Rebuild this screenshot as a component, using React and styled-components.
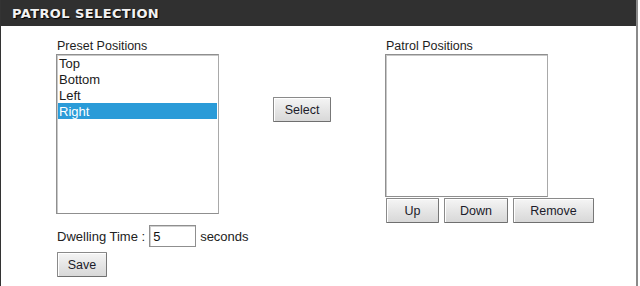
import React from 'react'
import styled, { createGlobalStyle } from 'styled-components'

const presets = ['Top', 'Bottom', 'Left', 'Right']

const App = () => {
  return (
    <>
      <GlobalStyle />
      <Frame>
        <Header>PATROL SELECTION</Header>
        <Body>
          <Column>
            <Label>Preset Positions</Label>
            <ListBox $height={160}>
              {presets.map((p) => (
                <Item key={p} $selected={p === 'Right'}>{p}</Item>
              ))}
            </ListBox>
            <DwellRow>
              Dwelling Time :
              <TimeInput defaultValue="5" />
              seconds
            </DwellRow>
            <Button $width={50}>Save</Button>
          </Column>

          <Middle>
            <Button $width={58}>Select</Button>
          </Middle>

          <Column>
            <Label>Patrol Positions</Label>
            <ListBox $height={143} />
            <ButtonRow>
              <Button $width={53}>Up</Button>
              <Button $width={64}>Down</Button>
              <Button $width={81}>Remove</Button>
            </ButtonRow>
          </Column>
        </Body>
      </Frame>
    </>
  )
}

export default App

const GlobalStyle = createGlobalStyle`
    html, body {
        margin: 0;
        padding: 0;
        background: #fff;
    }
    body {
        font-family: "Liberation Sans", Arial, sans-serif;
        font-size: 12px;
        color: #222;
    }
`

const Frame = styled.div`
    width: 638px;
    height: 286px;
    box-sizing: border-box;
    border-left: 1px solid #333;
    border-right: 2px solid #8a8a8a;
`

const Header = styled.div`
    height: 26px;
    background: #303030;
    color: #f2f2f2;
    font-family: "DejaVu Sans", Verdana, sans-serif;
    font-weight: bold;
    font-size: 13px;
    letter-spacing: 0.4px;
    line-height: 28px;
    padding-left: 11px;
    text-shadow: 1px 1px 1px #000;
`

const Body = styled.div`
    display: flex;
    align-items: flex-start;
    padding: 13px 0 0 55px;
`

const Column = styled.div`
    display: flex;
    flex-direction: column;
    align-items: flex-start;
    width: 163px;
`

const Middle = styled.div`
    margin: 58px 54px 0;
`

const Label = styled.div`
    height: 15px;
    line-height: 15px;
    padding-left: 1px;
    font-size: 12.5px;
    color: #1e1e1e;
`

const ListBox = styled.div`
    width: 163px;
    height: ${(p) => p.$height}px;
    box-sizing: border-box;
    border: 1px solid #8f8f8f;
    border-right-color: #a9a9a9;
    box-shadow: inset 1px 1px 0 #c8c8c8;
    padding: 0 1px;
    background: #fff;
    overflow: hidden;
`

const Item = styled.div`
    height: 16px;
    line-height: 17px;
    font-size: 13px;
    padding-left: 1px;
    color: ${(p) => (p.$selected ? '#fff' : '#1a1a1a')};
    background: ${(p) => (p.$selected ? '#2a9bd8' : 'transparent')};
`

const DwellRow = styled.div`
    display: flex;
    align-items: center;
    gap: 4px;
    margin-top: 11px;
    padding-left: 1px;
    height: 22px;
    font-size: 13px;
    white-space: nowrap;
`

const TimeInput = styled.input`
    width: 47px;
    height: 22px;
    box-sizing: border-box;
    border: 1px solid #8f8f8f;
    box-shadow: inset 1px 1px 0 #d0d0d0;
    padding: 0 3px;
    font-family: "Liberation Sans", Arial, sans-serif;
    font-size: 13px;
    color: #111;
    outline: none;
`

const Button = styled.button`
    width: ${(p) => p.$width}px;
    height: 25px;
    box-sizing: border-box;
    border: 1px solid #8a8a8a;
    border-right-color: #777;
    border-bottom-color: #6f6f6f;
    border-radius: 1px;
    background: linear-gradient(#f5f5f5, #e6e6e6 50%, #d8d8d8);
    box-shadow: inset 1px 1px 0 #fff;
    font-family: "Liberation Sans", Arial, sans-serif;
    font-size: 12.5px;
    color: #1b1b2a;
    padding: 0;

    ${Column} > & {
        margin-top: 5px;
        margin-left: 1px;
    }
`

const ButtonRow = styled.div`
    display: flex;
    gap: 5px;
    margin-top: 1px;
    padding-left: 1px;
    width: 240px;
`
